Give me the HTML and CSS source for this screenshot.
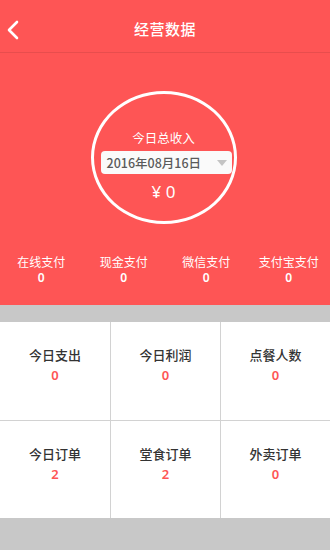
FILE: index.html
```html
<!DOCTYPE html>
<html lang="zh">
<head>
<meta charset="utf-8">
<title>经营数据</title>
<link rel="stylesheet" href="styles.css">
</head>
<body>
<div class="page">
  <header class="header">
    <div class="back">
      <svg width="14" height="20" viewBox="0 0 14 20"><polyline points="11,2 3,10 11,18" fill="none" stroke="#fff" stroke-width="2.6" stroke-linecap="round" stroke-linejoin="round"/></svg>
    </div>
    <div class="title">经营数据</div>
    <div class="spacer"></div>
  </header>
  <section class="hero">
    <div class="circle">
      <div class="circle-label">今日总收入</div>
      <div class="date-box">
        <span class="date-text">2016年08月16日</span>
        <span class="caret"></span>
      </div>
      <div class="amount">¥ 0</div>
    </div>
    <div class="pays">
      <div class="pay"><div class="pay-label">在线支付</div><div class="pay-val">0</div></div>
      <div class="pay"><div class="pay-label">现金支付</div><div class="pay-val">0</div></div>
      <div class="pay"><div class="pay-label">微信支付</div><div class="pay-val">0</div></div>
      <div class="pay"><div class="pay-label">支付宝支付</div><div class="pay-val">0</div></div>
    </div>
  </section>
  <section class="grid">
    <div class="cell"><div class="cell-label">今日支出</div><div class="cell-val">0</div></div>
    <div class="cell"><div class="cell-label">今日利润</div><div class="cell-val">0</div></div>
    <div class="cell"><div class="cell-label">点餐人数</div><div class="cell-val">0</div></div>
    <div class="cell"><div class="cell-label">今日订单</div><div class="cell-val">2</div></div>
    <div class="cell"><div class="cell-label">堂食订单</div><div class="cell-val">2</div></div>
    <div class="cell"><div class="cell-label">外卖订单</div><div class="cell-val">0</div></div>
  </section>
</div>
</body>
</html>
```
FILE: styles.css
```css
html, body {
  margin: 0;
  padding: 0;
  background: #c8c8c8;
}
body {
  font-family: "Noto Sans CJK SC", "Noto Sans", sans-serif;
}
.page {
  width: 330px;
  height: 550px;
  background: #c8c8c8;
  overflow: hidden;
}
.header {
  background: #fe5555;
  border-bottom: 1px solid #e84d4d;
  display: grid;
  grid-template-columns: 40px 1fr 40px;
  align-items: center;
  padding-top: 6px;
  height: 46px;
}
.back {
  display: flex;
  align-items: center;
  padding-left: 6px;
  padding-top: 2px;
}
.title {
  text-align: center;
  color: #fff;
  font-size: 15px;
  font-weight: 500;
  letter-spacing: 0.5px;
  line-height: 20px;
}
.hero {
  background: #fe5555;
  padding-top: 38px;
  padding-bottom: 19px;
  display: flex;
  flex-direction: column;
  align-items: center;
}
.circle {
  width: 146px;
  height: 133px;
  box-sizing: border-box;
  border: 3px solid #fff;
  border-radius: 50%;
  display: flex;
  flex-direction: column;
  align-items: center;
  padding-top: 35px;
  margin-left: -3px;
}
.circle-label {
  color: #fff;
  font-size: 12.5px;
  line-height: 18px;
}
.date-box {
  margin-top: 4px;
  width: 131px;
  height: 23px;
  box-sizing: border-box;
  background: #fafafa;
  border-radius: 4px;
  display: flex;
  align-items: center;
  justify-content: space-between;
  padding: 0 5px 0 6px;
  margin-left: 5px;
}
.date-text {
  color: #5a5a5a;
  font-size: 12.5px;
  font-weight: 500;
  line-height: 16px;
}
.caret {
  width: 0;
  height: 0;
  border-left: 5px solid transparent;
  border-right: 5px solid transparent;
  border-top: 6px solid #c4c4c4;
}
.amount {
  margin-top: 8px;
  color: #fff;
  font-size: 17px;
  line-height: 20px;
  font-family: "Noto Sans", "Noto Sans CJK SC", sans-serif;
}
.pays {
  margin-top: 30px;
  width: 330px;
  display: grid;
  grid-template-columns: repeat(4, 1fr);
}
.pay {
  text-align: center;
  color: #fff;
  font-size: 12px;
  line-height: 16px;
}
.pay-val {
  font-family: "Noto Sans", sans-serif;
  font-weight: 600;
  font-size: 12px;
}
.grid {
  margin-top: 17px;
  display: grid;
  grid-template-columns: 110px 109px 109px;
  grid-template-rows: 98px 97px;
  gap: 1px;
  background: #d2d2d2;
}
.cell {
  background: #fff;
  display: flex;
  flex-direction: column;
  align-items: center;
  padding-top: 24px;
  box-sizing: border-box;
}
.cell-label {
  color: #333;
  font-size: 13px;
  line-height: 18px;
  font-weight: 500;
}
.cell-val {
  margin-top: 2px;
  color: #fe5555;
  font-size: 13px;
  line-height: 18px;
  font-weight: 600;
  font-family: "Noto Sans", sans-serif;
}
```
